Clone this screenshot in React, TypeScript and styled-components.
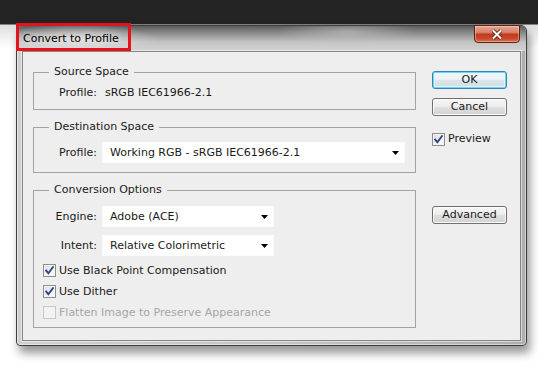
import React from "react";
import styled, { createGlobalStyle, css } from "styled-components";

const GlobalStyle = createGlobalStyle`
  html, body { margin: 0; padding: 0; background: #fff; }
  body { font-family: "DejaVu Sans", Verdana, sans-serif; font-size: 11px; color: #000; }
  * { box-sizing: border-box; }
`;

const Desktop = styled.div`
  width: 538px;
  height: 371px;
  overflow: hidden;
  padding: 25px 0 0 16px;
  background: linear-gradient(
    to bottom,
    #232323 0,
    #232323 24px,
    #dedede 25px,
    #ffffff 48px
  );
`;

const Dialog = styled.div`
  position: relative;
  width: 511px;
  height: 321px;
  display: flex;
  flex-direction: column;
  border: 1px solid #3e3e3e;
  border-radius: 6px 6px 4px 4px;
  background: linear-gradient(to right, #cfcfcf, #c4c4c4 50%, #aeaeae);
  box-shadow: 3px 7px 10px rgba(0, 0, 0, 0.42),
    inset 0 0 0 1px rgba(255, 255, 255, 0.45);
`;

const Annotation = styled.div`
  position: absolute;
  left: -1px;
  top: -3px;
  width: 115px;
  height: 28px;
  border: 3px solid #e3141b;
  pointer-events: none;
`;

const TitleBar = styled.div`
  height: 25px;
  flex: none;
  display: flex;
  align-items: center;
  justify-content: space-between;
  padding-left: 6px;
  border-radius: 5px 5px 0 0;
  background: radial-gradient(
      ellipse 80px 16px at 60px 14px,
      rgba(225, 225, 225, 0.95),
      rgba(225, 225, 225, 0)
    ),
    radial-gradient(
      ellipse 70px 14px at 330px 6px,
      rgba(200, 200, 200, 0.55),
      rgba(200, 200, 200, 0)
    ),
    linear-gradient(to bottom, #5c5c5c 0, #8e8e8e 30%, #c4c4c4 65%, #d3d3d3 100%);
`;

const TitleText = styled.span`
  font-size: 11px;
  line-height: 14px;
  color: #000;
  text-shadow: 0 0 6px rgba(255, 255, 255, 0.9);
`;

const CloseButton = styled.div`
  align-self: flex-start;
  margin-top: -1px;
  margin-right: 6px;
  width: 46px;
  height: 18px;
  display: flex;
  align-items: center;
  justify-content: center;
  border: 1px solid #5b2114;
  border-radius: 0 0 4px 4px;
  background: linear-gradient(
    to bottom,
    #e9a795 0,
    #d9806a 40%,
    #c2391d 52%,
    #c8492b 78%,
    #db7250 100%
  );
  box-shadow: inset 0 0 0 1px rgba(255, 215, 200, 0.45);
`;

const Body = styled.div`
  flex: 1;
  display: flex;
  padding: 0 5px 4px;
`;

const Client = styled.div`
  flex: 1;
  display: flex;
  align-items: flex-start;
  gap: 16px;
  padding: 13px 13px 0 10px;
  border: 1px solid #868686;
  background: #eeeeee;
  box-shadow: 0 0 0 1px rgba(255, 255, 255, 0.5);
`;

const LeftColumn = styled.div`
  width: 383px;
  display: flex;
  flex-direction: column;
  gap: 10px;
`;

const GroupBox = styled.fieldset<{ $pt: number; $pb: number; $gap?: number }>`
  margin: 0;
  min-width: 0;
  border: 1px solid #a3a3a3;
  padding: ${(p) => p.$pt}px 9px ${(p) => p.$pb}px 9px;
  display: flex;
  flex-direction: column;
  gap: ${(p) => p.$gap ?? 0}px;
`;

const Legend = styled.legend`
  margin-left: 6px;
  padding: 0 5px;
  font-size: 11px;
  line-height: 14px;
  color: #1a1a1a;
`;

const Row = styled.div`
  display: flex;
  align-items: center;
  line-height: 14px;
`;

const Label = styled.span`
  width: 54px;
  flex: none;
  text-align: right;
  margin-right: 5px;
  color: #1a1a1a;
`;

const Value = styled.span`
  margin-left: 3px;
  color: #1a1a1a;
`;

const SelectBox = styled.div<{ $w: number }>`
  width: ${(p) => p.$w}px;
  height: 21px;
  display: flex;
  align-items: center;
  justify-content: space-between;
  padding: 0 5px 0 7px;
  background: #ffffff;
  border: 1px solid #fbfbfb;
  color: #1a1a1a;
`;

const CheckRow = styled.label<{ $disabled?: boolean }>`
  display: flex;
  align-items: center;
  gap: 3px;
  height: 13px;
  line-height: 13px;
  color: ${(p) => (p.$disabled ? "#a6a6a6" : "#1a1a1a")};
`;

const Box = styled.span<{ $disabled?: boolean }>`
  width: 13px;
  height: 13px;
  flex: none;
  display: flex;
  align-items: center;
  justify-content: center;
  border: 1px solid #8e8f8f;
  background: linear-gradient(135deg, #d9d9d9, #f5f5f5 60%, #ffffff);
  box-shadow: inset 0 0 0 1px #f4f4f4;
  ${(p) =>
    p.$disabled &&
    css`
      border-color: #c7c7c7;
      background: #f3f3f3;
      box-shadow: none;
    `}
`;

const RightColumn = styled.div`
  width: 75px;
  display: flex;
  flex-direction: column;
  padding-top: 6px;
`;

const Button = styled.div<{ $default?: boolean; $mt?: number }>`
  height: 18px;
  margin-top: ${(p) => p.$mt ?? 0}px;
  display: flex;
  align-items: center;
  justify-content: center;
  border: 1px solid #707070;
  border-radius: 3px;
  background: linear-gradient(
    to bottom,
    #f6f6f6 0,
    #ececec 50%,
    #dfdfdf 51%,
    #d3d3d3 100%
  );
  box-shadow: inset 0 0 0 1px #fbfbfb;
  color: #1a1a1a;
  line-height: 14px;
  ${(p) =>
    p.$default &&
    css`
      border-color: #3c7fb1;
      box-shadow: inset 0 0 0 1px #6fd6fb, inset 0 0 0 2px rgba(230, 248, 255, 0.8);
      background: linear-gradient(
        to bottom,
        #f3f8fb 0,
        #eaf1f5 50%,
        #dbe4e9 51%,
        #d3dde3 100%
      );
    `}
`;

const PreviewRow = styled(CheckRow)`
  margin-top: 16px;
  height: 14px;
  line-height: 14px;
`;

const Arrow = () => (
  <svg width="7" height="4" viewBox="0 0 7 4">
    <path d="M0 0 H7 L3.5 4 Z" fill="#000" />
  </svg>
);

const Check = () => (
  <svg width="9" height="9" viewBox="0 0 9 9">
    <path
      d="M1.2 4.6 L3.4 7.2 L7.9 1.2"
      fill="none"
      stroke="#2d4587"
      strokeWidth="1.9"
      strokeLinecap="square"
    />
  </svg>
);

const CloseX = () => (
  <svg width="14" height="11" viewBox="0 0 14 11">
    <path d="M3 1.5 L11 9.5 M11 1.5 L3 9.5" stroke="#4a1a10" strokeWidth="3.8" />
    <path d="M3 1.5 L11 9.5 M11 1.5 L3 9.5" stroke="#ffffff" strokeWidth="2.1" />
  </svg>
);

const Select = ({ w, text }: { w: number; text: string }) => (
  <SelectBox $w={w}>
    <span>{text}</span>
    <Arrow />
  </SelectBox>
);

const CheckBox = ({
  label,
  checked,
  disabled,
}: {
  label: string;
  checked?: boolean;
  disabled?: boolean;
}) => (
  <CheckRow $disabled={disabled}>
    <Box $disabled={disabled}>{checked && <Check />}</Box>
    {label}
  </CheckRow>
);

export default function App() {
  return (
    <>
      <GlobalStyle />
      <Desktop>
        <Dialog>
          <TitleBar>
            <TitleText>Convert to Profile</TitleText>
            <CloseButton>
              <CloseX />
            </CloseButton>
          </TitleBar>
          <Body>
            <Client>
              <LeftColumn>
                <GroupBox $pt={7} $pb={9}>
                  <Legend>Source Space</Legend>
                  <Row>
                    <Label>Profile:</Label>
                    <Value>sRGB IEC61966-2.1</Value>
                  </Row>
                </GroupBox>
                <GroupBox $pt={8} $pb={9}>
                  <Legend>Destination Space</Legend>
                  <Row>
                    <Label>Profile:</Label>
                    <Select w={303} text="Working RGB - sRGB IEC61966-2.1" />
                  </Row>
                </GroupBox>
                <GroupBox $pt={9} $pb={8} $gap={8}>
                  <Legend>Conversion Options</Legend>
                  <Row>
                    <Label>Engine:</Label>
                    <Select w={172} text="Adobe (ACE)" />
                  </Row>
                  <Row>
                    <Label>Intent:</Label>
                    <Select w={172} text="Relative Colorimetric" />
                  </Row>
                  <CheckBox label="Use Black Point Compensation" checked />
                  <CheckBox label="Use Dither" checked />
                  <CheckBox label="Flatten Image to Preserve Appearance" disabled />
                </GroupBox>
              </LeftColumn>
              <RightColumn>
                <Button $default>OK</Button>
                <Button $mt={9}>Cancel</Button>
                <PreviewRow>
                  <Box>
                    <Check />
                  </Box>
                  Preview
                </PreviewRow>
                <Button $mt={60}>Advanced</Button>
              </RightColumn>
            </Client>
          </Body>
          <Annotation />
        </Dialog>
      </Desktop>
    </>
  );
}
